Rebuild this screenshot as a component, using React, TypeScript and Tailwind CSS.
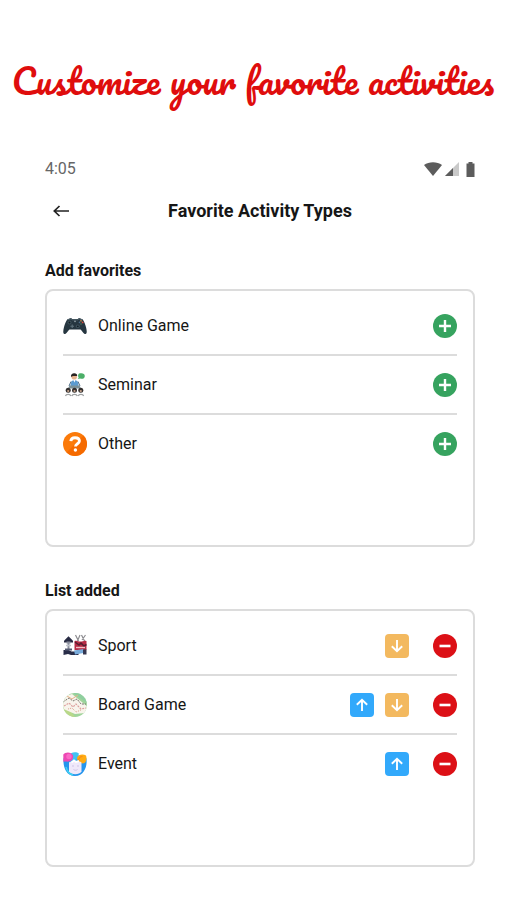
import { useState } from "react";

type Activity = {
  name: string;
  icon: React.ReactNode;
};

const GamepadIcon = () => (
  <svg viewBox="0 0 24 24" className="h-6 w-6" aria-hidden="true">
    <path
      d="M4.5 5.2 8 4l1.2 1h5.6L16 4l3.500 1.200c1.500 1.600 2.700 4.800 3.600 8.300.8 3.500 1.100 6-.6 6.500-1.700.3-3.400-3.600-5-4.600H6.500c-1.600 1-3.300 4.900-5 4.600-1.700-.5-1.400-3-.6-6.500.9-3.500 2.100-6.700 3.600-8.300z"
      fill="#263640"
    />
    <path d="M4.500 5.800 8 4.800l1.200 1h5.600l1.200-1 3.500 1" fill="none" stroke="#50636c" strokeWidth="1" />
    <circle cx="6.500" cy="8.500" r="2" fill="#3f525c" />
    <circle cx="6.500" cy="8.500" r="1" fill="#131d24" />
    <circle cx="14.800" cy="12.300" r="1.900" fill="#3f525c" />
    <circle cx="14.800" cy="12.300" r="0.900" fill="#131d24" />
    <path d="M9.200 10.400v3.600M7.400 12.200H11" stroke="#60737c" strokeWidth="1.100" />
    <circle cx="12" cy="7.300" r="0.900" fill="#8d9ca3" />
    <circle cx="18" cy="6.800" r="0.900" fill="#b9854a" />
    <circle cx="19.600" cy="8.400" r="0.900" fill="#dc4b3e" />
    <circle cx="16.500" cy="8.400" r="0.800" fill="#4f6f8c" />
    <circle cx="18" cy="10" r="0.800" fill="#4e7a5a" />
  </svg>
);

const SeminarIcon = () => (
  <svg viewBox="0 0 24 24" className="h-6 w-6" aria-hidden="true">
    <path d="M16 .6c3.200-1 5.800-.1 5.800 2.400s-2.500 3.300-4.600 2.600L14.800 6l.9-1.600c-1-1-.8-3 .3-3.800z" fill="#4caf68" />
    <circle cx="11.200" cy="3.800" r="2.800" fill="#e8b48e" />
    <path d="M8 4C7.600 1.400 9.400.2 11.300.3c1.900 0 3 1.100 2.900 2.700-2.200.4-4.200-.6-6.200 1z" fill="#2b2422" />
    <path d="M7.500 13c0-4 1.200-6 4-6s4 2 4 6z" fill="#5b9bd0" />
    <path d="M10.400 7h2l-1 2.500z" fill="#fff" />
    <path d="m8 8.500-2 4.500M15 8.500l2 4.500" stroke="#4a6b85" strokeWidth="1" />
    <path d="M6.500 12.500h10l1.500 3H5z" fill="#7b9198" />
    <g fill="#34302f">
      <circle cx="5.200" cy="17.200" r="2.500" />
      <circle cx="11.500" cy="17.200" r="2.500" />
      <circle cx="17.800" cy="17.200" r="2.500" />
    </g>
    <g fill="#c8a48c">
      <circle cx="5.200" cy="18" r="1.100" />
      <circle cx="11.500" cy="18" r="1.100" />
      <circle cx="17.800" cy="18" r="1.100" />
    </g>
    <path
      d="M2.500 23c.5-2.200 4.800-2.200 5.300 0M8.900 23c.5-2.200 4.800-2.200 5.300 0M15.300 23c.5-2.200 4.800-2.200 5.300 0"
      fill="none"
      stroke="#9da0a1"
      strokeWidth="1.200"
    />
  </svg>
);

const QuestionIcon = () => (
  <svg viewBox="0 0 24 24" className="h-6 w-6" aria-hidden="true">
    <circle cx="12" cy="12" r="12" fill="#fb7a0a" />
    <path d="M3.500 20.500A12 12 0 0 0 20.500 3.500z" fill="#f56a00" />
    <path
      d="M7.800 9.200C8 6.900 9.700 5.700 12 5.700c2.600 0 4.400 1.300 4.400 3.400 0 2.600-3.900 2.700-3.900 5.400"
      fill="none"
      stroke="#fff"
      strokeWidth="2.900"
    />
    <circle cx="12.400" cy="18" r="1.700" fill="#fff" />
  </svg>
);

const SportIcon = () => (
  <svg viewBox="0 0 24 24" className="h-6 w-6" aria-hidden="true">
    <path d="M5.500 2.200 10 6.800v1.700H1V6.800z" fill="#282b43" />
    <path d="M3.500 8.500h4M5.500 8v8" stroke="#8b8f9d" strokeWidth="2" />
    <path d="M3 11.500h5" stroke="#c1c4cc" strokeWidth="1.500" />
    <path d="M.5 16h5l3 1.500h7V21H8l-3-1-4.500 1z" fill="#292d48" />
    <path d="M2 14.500h7v2H2z" fill="#565b72" />
    <path d="m12.500 1 3 6M17 1l-2.500 6M18.500 1l3.500 7M22.500 1 19 6" stroke="#8e8d91" strokeWidth="1.200" />
    <path d="M11.500 7c2.500-1 3.500.5 6 .5S21 6 23.500 7v9h-12z" fill="#b82a45" />
    <path d="m12 8 4 3 2-2 3 3 2.500-1.500" fill="none" stroke="#571d30" strokeWidth="1.500" />
    <path d="M13 13.500h9" stroke="#f1bfc5" strokeWidth="1.400" />
    <path d="M11 16.500 20.500 15v4L12 20.500z" fill="#79acdb" />
    <path d="M20 15.500h3.500v5H20z" fill="#343650" />
  </svg>
);

const BoardGameIcon = () => (
  <svg viewBox="0 0 24 24" className="h-6 w-6" aria-hidden="true">
    <clipPath id="board">
      <circle cx="12" cy="12" r="11.900" />
    </clipPath>
    <g clipPath="url(#board)">
      <path d="M0 0h24v24H0z" fill="#a0d49b" />
      <path d="M10 0h14v10z" fill="#8fcf9f" />
      <path d="M0 14c5 1 8 4 12 10H0z" fill="#b9d889" />
      <path d="M-2 4 9 1l17 14-4 5-10 1L-2 15z" fill="#f8f4ec" />
      <path d="m0 9 6-4 4 3 4-2 4 5 5 0" fill="none" stroke="#77746c" strokeWidth="1" strokeDasharray="2 1" />
      <path d="m1 13 5-3 4 4 3-3 5 5 5-1" fill="none" stroke="#dda09e" strokeWidth="1.200" strokeDasharray="2 1" />
      <path d="m5 16 4-1 4 4 5-2" fill="none" stroke="#dba08f" strokeWidth="1" strokeDasharray="1 1" />
      <path d="m4 3 5 3 6-4" fill="none" stroke="#e7b18a" strokeWidth="1" />
    </g>
  </svg>
);

const EventIcon = () => (
  <svg viewBox="0 0 24 24" className="h-6 w-6" aria-hidden="true">
    <path d="M.5 7c0-5 23-5 23 0 .5 5-.5 9-2.500 12-2 3.500-5 5-9 5s-7-1.500-9-5C1 16 .2 11 .5 7z" fill="#2495ed" />
    <path d="M8 1.200c3-1.300 6-1.100 8 .5l-3 7H8z" fill="#41c2f1" />
    <path d="M.3 2.500C2-.2 8.500-.5 10 3.500c.8 3-1.500 5.500-4 6C4 10 1.500 9 .4 10z" fill="#ed48b3" />
    <circle cx="6" cy="4.500" r="2.700" fill="#fb69c6" />
    <path d="M14 6c.5-3.500 6-4.500 9-2.500 1 3 .5 6-1.500 7.500-3 1.500-7.500-1.500-7.500-5z" fill="#ffab12" />
    <path d="M15.500 9c0-3 2-4.500 4-4.500" fill="none" stroke="#f68719" strokeWidth="1.200" />
    <path d="M6 10.500c2-2 10.500-2 12.500 0v9c-2 3.500-10.500 3.500-12.500 0z" fill="#efe8fa" />
    <path d="M8.500 10.500 11 8.500l2 1.500 3-1" fill="none" stroke="#fff" strokeWidth="2" />
    <path d="M9 14h2M14 14h2M10.500 17.500c1.500 1 3 1 4 0" fill="none" stroke="#cfc3e6" strokeWidth="1" />
    <path d="M3 15c1 4 3 7 7 8" fill="none" stroke="#3fd2f1" strokeWidth="1.500" />
  </svg>
);

const ArrowIcon = ({ down = false }: { down?: boolean }) => (
  <svg viewBox="0 0 24 24" className="h-6 w-6" fill="none" stroke="#fff" strokeWidth="1.900" aria-hidden="true">
    <path d={down ? "M12 6v11M6.800 12.200 12 17.100l5.200-4.900" : "M12 18V7M6.800 11.800 12 6.900l5.200 4.900"} />
  </svg>
);

const startFavorites: Activity[] = [
  { name: "Sport", icon: <SportIcon /> },
  { name: "Board Game", icon: <BoardGameIcon /> },
  { name: "Event", icon: <EventIcon /> },
];

const startOthers: Activity[] = [
  { name: "Online Game", icon: <GamepadIcon /> },
  { name: "Seminar", icon: <SeminarIcon /> },
  { name: "Other", icon: <QuestionIcon /> },
];

function StatusBar() {
  return (
    <div className="flex h-6 items-center justify-between text-[#666]">
      <span className="text-base">4:05</span>
      <div className="flex items-center gap-[3px]">
        <svg viewBox="0 0 18 14" className="h-[14px] w-[18px]" aria-hidden="true">
          <path d="M0 3C5-.8 13-.8 18 3L9 14z" fill="#5c5c5c" />
        </svg>
        <svg viewBox="0 0 14 14" className="h-[14px] w-[14px]" aria-hidden="true">
          <path d="M0 14 14 0v14z" fill="#c9c9c9" />
          <path d="M0 14 8 6v8z" fill="#5c5c5c" />
        </svg>
        <svg viewBox="0 0 9 16" className="ml-1 h-4 w-[9px]" aria-hidden="true">
          <path d="M2.500 1h4v1.500h2V16H.5V2.500h2z" fill="#5c5c5c" />
        </svg>
      </div>
    </div>
  );
}

function App() {
  const [favorites, setFavorites] = useState(startFavorites);
  const [others, setOthers] = useState(startOthers);

  const add = (item: Activity) => {
    setOthers(others.filter((o) => o.name !== item.name));
    setFavorites([...favorites, item]);
  };

  const remove = (item: Activity) => {
    setFavorites(favorites.filter((f) => f.name !== item.name));
    setOthers([...others, item]);
  };

  const move = (from: number, to: number) => {
    const next = [...favorites];
    [next[from], next[to]] = [next[to], next[from]];
    setFavorites(next);
  };

  return (
    <div className="min-h-screen bg-white pt-14 pb-8 font-[Roboto,sans-serif] text-[#161616]">
      <h1 className="text-center font-[Pacifico,cursive] text-[35px] leading-[48px] whitespace-nowrap text-[#df0d0d]">
        Customize your favorite activities
      </h1>
      <main className="mt-[53px] pr-[31px] pl-[45px]">
        <StatusBar />
        <header className="mt-[14px] grid h-8 grid-cols-[32px_1fr_32px] items-center">
          <button type="button" aria-label="Back" className="flex h-8 w-8 cursor-pointer items-center justify-center">
            <svg viewBox="0 0 16 12" className="h-3 w-4" fill="none" stroke="#222" strokeWidth="1.700" aria-hidden="true">
              <path d="M16 6H1M6.500 1 1.300 6l5.200 5" />
            </svg>
          </button>
          <h2 className="text-center text-lg font-bold">Favorite Activity Types</h2>
        </header>

        <section className="mt-8">
          <h3 className="text-base font-bold">Add favorites</h3>
          <ul className="mt-[6px] min-h-[258px] rounded-lg border-2 border-[#dcdcdc] px-4 pt-[6px]">
            {others.map((item) => (
              <li
                key={item.name}
                className="flex h-[59px] items-center border-b-2 border-[#dcdcdc] last:border-transparent"
              >
                {item.icon}
                <span className="ml-[11px] flex-1 text-base">{item.name}</span>
                <button
                  type="button"
                  aria-label={`Add ${item.name}`}
                  onClick={() => add(item)}
                  className="h-6 w-6 cursor-pointer rounded-full bg-[#36a35f]"
                >
                  <svg viewBox="0 0 24 24" stroke="#fff" strokeWidth="2.400" aria-hidden="true">
                    <path d="M12 6v12M6 12h12" />
                  </svg>
                </button>
              </li>
            ))}
          </ul>
        </section>

        <section className="mt-8">
          <h3 className="text-base font-bold">List added</h3>
          <ul className="mt-[6px] min-h-[258px] rounded-lg border-2 border-[#dcdcdc] px-4 pt-[6px]">
            {favorites.map((item, i) => (
              <li
                key={item.name}
                className="flex h-[59px] items-center border-b-2 border-[#dcdcdc] last:border-transparent"
              >
                {item.icon}
                <span className="ml-[11px] flex-1 text-base">{item.name}</span>
                <div className="flex gap-[11px]">
                  {i > 0 && (
                    <button
                      type="button"
                      aria-label={`Move ${item.name} up`}
                      onClick={() => move(i, i - 1)}
                      className="h-6 w-6 cursor-pointer rounded bg-[#32a9fb]"
                    >
                      <ArrowIcon />
                    </button>
                  )}
                  {i < favorites.length - 1 && (
                    <button
                      type="button"
                      aria-label={`Move ${item.name} down`}
                      onClick={() => move(i, i + 1)}
                      className="h-6 w-6 cursor-pointer rounded bg-[#f3b95f]"
                    >
                      <ArrowIcon down />
                    </button>
                  )}
                </div>
                <button
                  type="button"
                  aria-label={`Remove ${item.name}`}
                  onClick={() => remove(item)}
                  className="ml-6 h-6 w-6 cursor-pointer rounded-full bg-[#dc1016]"
                >
                  <svg viewBox="0 0 24 24" stroke="#fff" strokeWidth="2.600" aria-hidden="true">
                    <path d="M6.500 12h11" />
                  </svg>
                </button>
              </li>
            ))}
          </ul>
        </section>
      </main>
    </div>
  );
}

export default App;
